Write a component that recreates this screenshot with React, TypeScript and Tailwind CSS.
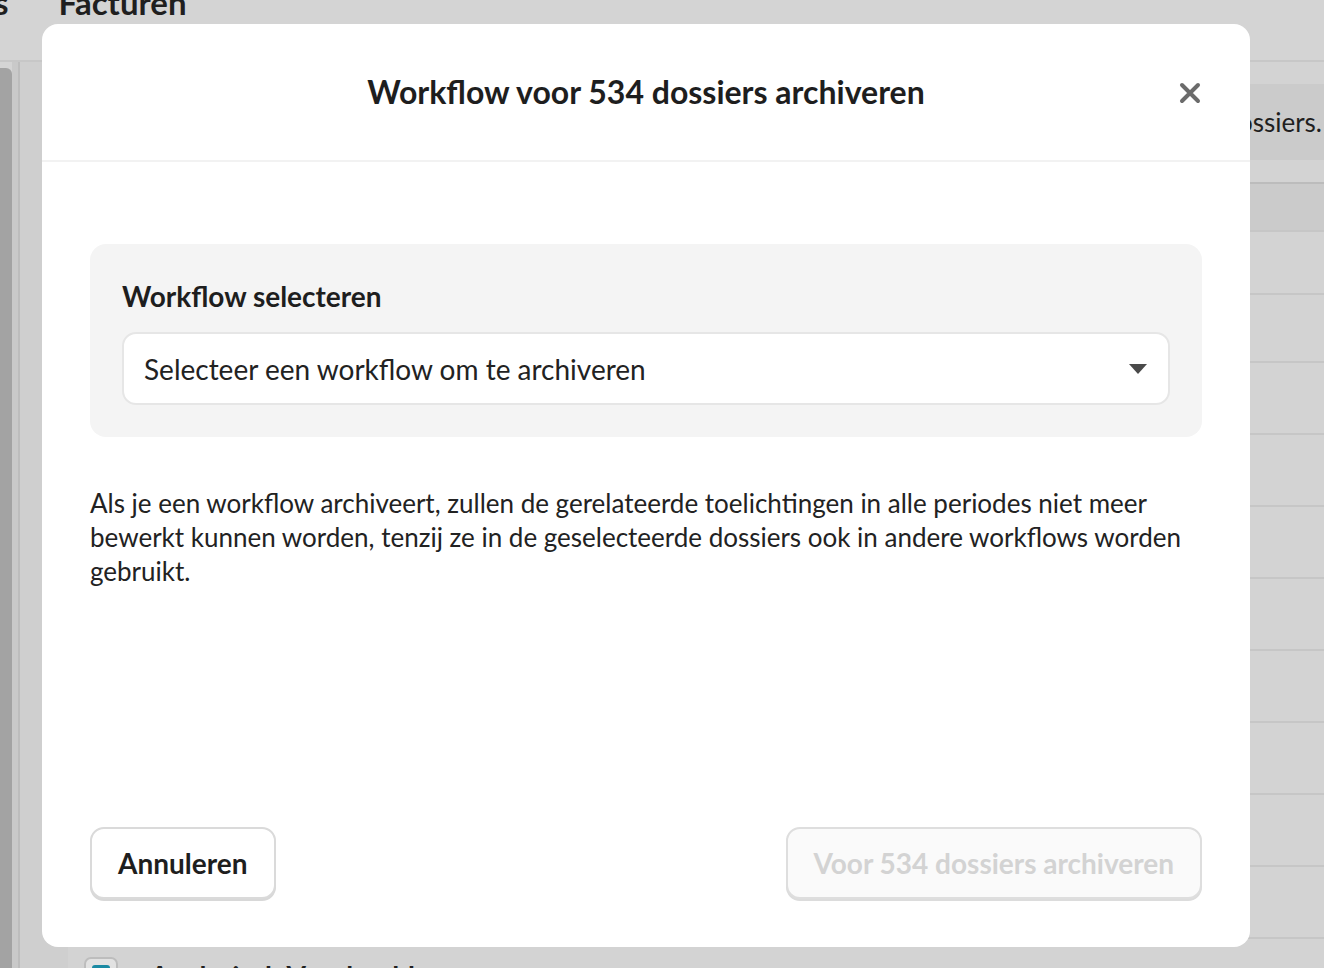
import React from "react";

const rowHeights = [63, 68, 72, 72, 72, 72, 72, 72, 72, 72];

const CloseIcon = () => (
    <svg width="22" height="22" viewBox="0 0 22 22" fill="none">
        <path d="M3 3l16 16M19 3L3 19" stroke="#6b6b6b" strokeWidth="4" strokeLinecap="round" />
    </svg>
);

const Caret = () => (
    <svg width="20" height="12" viewBox="0 0 20 12">
        <path d="M1 1h18l-9 10z" fill="#4a4a4a" />
    </svg>
);

const Background = () => (
    <div className="flex flex-col">
        <div className="h-[62px] shrink-0 border-b-2 border-[#c7c7c7] flex items-start overflow-hidden">
            <div className="flex gap-[50px] -mt-[16px] -ml-[6px] text-[33px] font-bold leading-[36px] text-[#1f1f1f]">
                <span>s</span>
                <span>Facturen</span>
            </div>
        </div>
        <div className="flex">
            <div className="w-[12px] mt-[6px] bg-[#a3a3a3] rounded-tr-[6px]" />
            <div className="w-[6px] bg-[#c9c9c9]" />
            <div className="w-[2px] bg-[#bdbdbd]" />
            <div className="w-[48px] bg-[#cfcfcf]" />
            <div className="flex-1 flex flex-col bg-[#d3d3d3]">
                <div className="mt-[22px] h-[76px] shrink-0 bg-[#cbcbcb] flex items-center justify-end pr-[2px] text-[26px] text-[#1f1f1f]">
                    Alle 534 dossiers.
                </div>
                <div className="mt-[22px] h-[2px] shrink-0 bg-[#bcbcbc]" />
                <div className="h-[46px] shrink-0 bg-[#cbcbcb]" />
                {rowHeights.map((h, i) => (
                    <div key={i} className="shrink-0 border-t-2 border-[#c6c6c6]" style={{ height: h }} />
                ))}
                <div className="h-[60px] shrink-0 border-t-2 border-[#c6c6c6] flex items-start gap-[32px] pl-[16px] pt-[18px]">
                    <div className="w-[34px] h-[34px] rounded-[7px] border-2 border-[#bdbdbd] bg-[#e2e2e2] p-[6px]">
                        <div className="w-full h-full rounded-[3px] bg-[#1b8aa3]" />
                    </div>
                    <span className="text-[28px] font-bold text-[#1f1f1f] leading-[34px] mt-[2px]">
                        Analytisch Voorbeeld
                    </span>
                </div>
            </div>
        </div>
    </div>
);

const App = () => {
    return (
        <div className="relative h-[968px] w-full overflow-hidden bg-[#d4d4d4] font-['Lato',sans-serif] text-[#222]">
            <Background />
            <div className="absolute left-[42px] top-[24px] w-[1208px] h-[923px] bg-white rounded-[16px] flex flex-col">
                <div className="relative h-[138px] shrink-0 border-b-2 border-[#f2f2f2] flex items-center justify-center">
                    <h1 className="text-[32px] font-bold text-[#1e1e1e]">Workflow voor 534 dossiers archiveren</h1>
                    <button className="absolute right-[49px] top-[58px]">
                        <CloseIcon />
                    </button>
                </div>
                <div className="flex-1 flex flex-col px-[48px] pt-[82px] pb-[48px]">
                    <div className="bg-[#f4f4f4] rounded-[16px] p-[32px]">
                        <div className="text-[28px] font-bold leading-[40px] mb-[16px] text-[#1e1e1e]">Workflow selecteren</div>
                        <div className="h-[73px] bg-white border-2 border-[#e6e6e6] rounded-[14px] flex items-center justify-between pl-[20px] pr-[20px]">
                            <span className="text-[28px]">Selecteer een workflow om te archiveren</span>
                            <Caret />
                        </div>
                    </div>
                    <p className="mt-[49px] text-[26px] leading-[34px] text-[#222]">
                        Als je een workflow archiveert, zullen de gerelateerde toelichtingen in alle periodes niet meer
                        bewerkt kunnen worden, tenzij ze in de geselecteerde dossiers ook in andere workflows worden
                        gebruikt.
                    </p>
                    <div className="flex-1" />
                    <div className="flex justify-between">
                        <button className="h-[72px] px-[26px] rounded-[14px] border-2 border-[#dadada] bg-white shadow-[0_2px_0_#d8d8d8] text-[28px] font-bold text-[#1e1e1e]">
                            Annuleren
                        </button>
                        <button
                            disabled
                            className="h-[72px] px-[26px] rounded-[14px] border-2 border-[#dedede] bg-[#fafafa] shadow-[0_2px_0_#dcdcdc] text-[28px] font-bold text-[#d3d3d3]"
                        >
                            Voor 534 dossiers archiveren
                        </button>
                    </div>
                </div>
            </div>
        </div>
    );
};

export default App;
